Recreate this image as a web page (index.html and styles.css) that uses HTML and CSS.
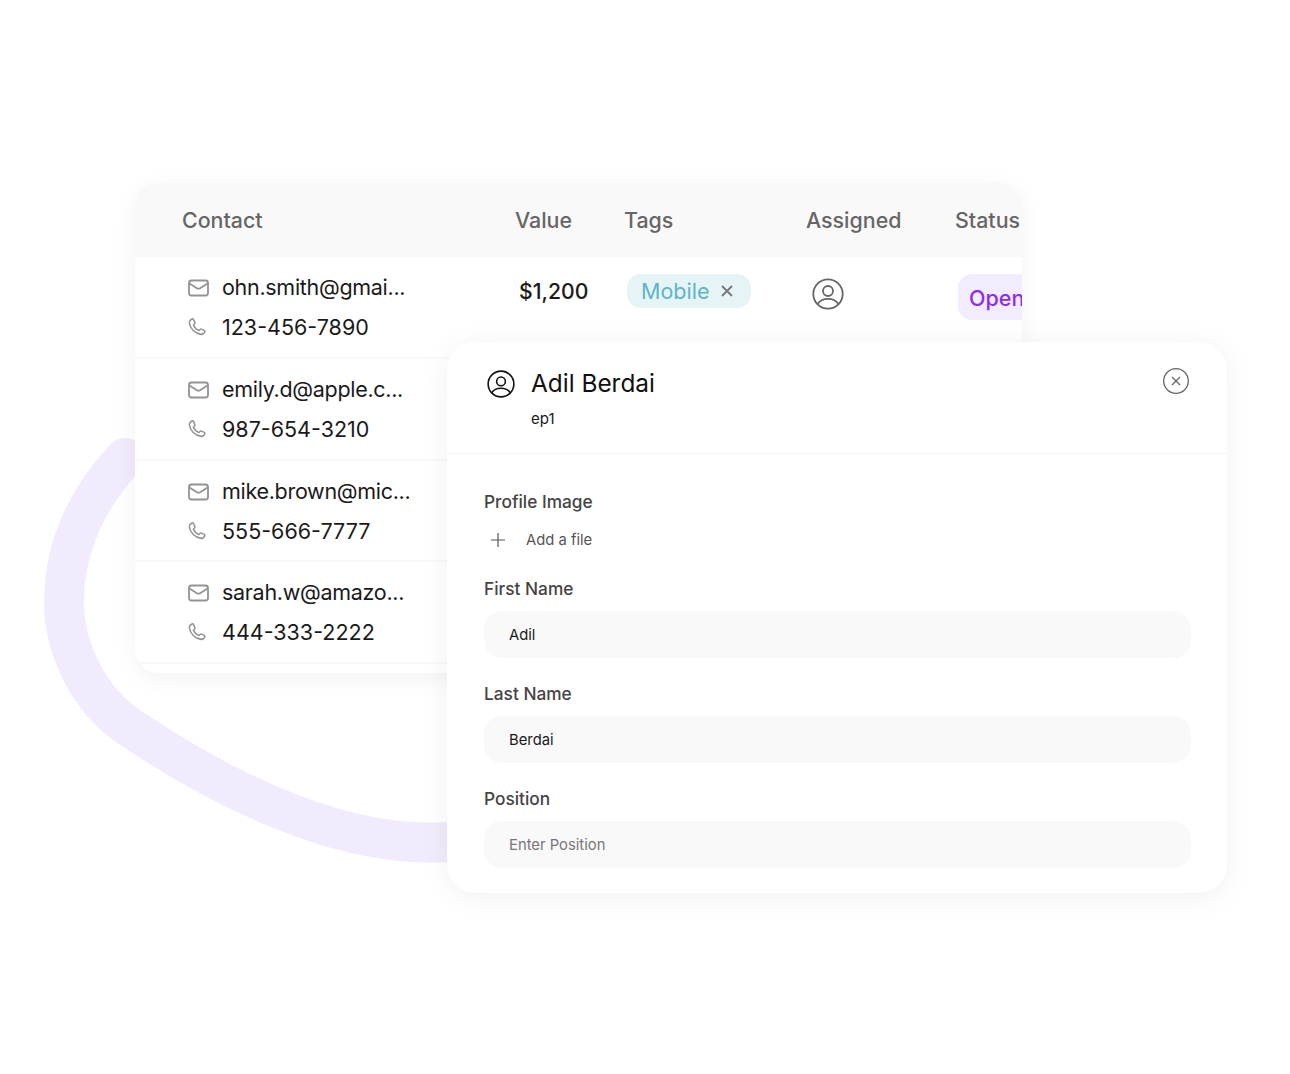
FILE: index.html
```html
<!DOCTYPE html>
<html lang="en">
<head>
  <meta charset="UTF-8" />
  <meta name="viewport" content="width=device-width, initial-scale=1.0"/>
  <title>Contacts</title>
  <link rel="stylesheet" href="styles.css">
</head>
<body>

<svg width="0" height="0" class="defs">
  <symbol id="i-mail" viewBox="0 0 22 20">
    <rect x="2" y="3.500" width="19" height="15" rx="2.500" fill="none" stroke="currentColor" stroke-width="1.800"/>
    <path d="M2.500 6.500l7.400 4.700a3 3 0 0 0 3.200 0L20.500 6.500" fill="none" stroke="currentColor" stroke-width="1.800"/>
  </symbol>
  <symbol id="i-phone" viewBox="0 0 20 20">
    <path d="M6 1.500 7.600 5a1.500 1.500 0 0 1-.4 1.700L6 7.800a11 11 0 0 0 6.200 6.200l1.100-1.200a1.500 1.500 0 0 1 1.700-.4l3 1.400c.6.3.8.9.6 1.500-.6 1.900-2.100 3-4 2.900C7.600 17.300 2.500 12 1.500 5.500 1.300 3.500 2.500 2 4.300 1.100 5 .8 5.700 1 6 1.500Z" fill="none" stroke="currentColor" stroke-width="1.700" stroke-linejoin="round"/>
  </symbol>
  <symbol id="i-user" viewBox="0 0 32 32">
    <circle cx="16" cy="16" r="14.700" fill="none" stroke="currentColor" stroke-width="1.800"/>
    <circle cx="16" cy="13" r="5" fill="none" stroke="currentColor" stroke-width="1.800"/>
    <path d="M5.500 26c2-3.300 5.800-5.200 10.500-5.200S24.500 22.700 26.500 26" fill="none" stroke="currentColor" stroke-width="1.800"/>
  </symbol>
</svg>

<div class="canvas">
  <svg class="curve" width="460" height="440" viewBox="0 0 460 440">
    <path d="M125 28C85 70 64 120 64 172C64 220 90 270 128 296C200 345 330 420 447 412" fill="none" stroke="#f2ebfe" stroke-width="40" stroke-linecap="round"/>
  </svg>

  <div class="table-card">
    <div class="table-row table-head">
      <div class="col-contact">Contact</div>
      <div>Value</div>
      <div>Tags</div>
      <div>Assigned</div>
      <div>Status</div>
    </div>

    <div class="table-row contact-row">
      <div class="contact-cell">
        <div class="contact-line email"><svg class="line-icon"><use href="#i-mail"/></svg>ohn.smith@gmai...</div>
        <div class="contact-line"><svg class="line-icon phone"><use href="#i-phone"/></svg>123-456-7890</div>
      </div>
      <div class="value-cell">$1,200</div>
      <div class="tags-cell">
        <span class="tag">Mobile
          <svg class="tag-x" viewBox="0 0 12 12"><path d="M1 1l10 10M11 1 1 11" fill="none" stroke="currentColor" stroke-width="1.800"/></svg>
        </span>
      </div>
      <div class="assigned-cell"><svg class="avatar"><use href="#i-user"/></svg></div>
      <div class="status-cell"><span class="status">Open</span></div>
    </div>

    <div class="table-row contact-row">
      <div class="contact-cell">
        <div class="contact-line email"><svg class="line-icon"><use href="#i-mail"/></svg>emily.d@apple.c...</div>
        <div class="contact-line"><svg class="line-icon phone"><use href="#i-phone"/></svg>987-654-3210</div>
      </div>
    </div>

    <div class="table-row contact-row">
      <div class="contact-cell">
        <div class="contact-line email"><svg class="line-icon"><use href="#i-mail"/></svg>mike.brown@mic...</div>
        <div class="contact-line"><svg class="line-icon phone"><use href="#i-phone"/></svg>555-666-7777</div>
      </div>
    </div>

    <div class="table-row contact-row">
      <div class="contact-cell">
        <div class="contact-line email"><svg class="line-icon"><use href="#i-mail"/></svg>sarah.w@amazo...</div>
        <div class="contact-line"><svg class="line-icon phone"><use href="#i-phone"/></svg>444-333-2222</div>
      </div>
    </div>
  </div>

  <div class="form-card">
    <div class="form-head">
      <svg class="form-avatar"><use href="#i-user"/></svg>
      <div class="form-title">
        <h2>Adil Berdai</h2>
        <p>ep1</p>
      </div>
      <svg class="close" viewBox="0 0 26 26">
        <circle cx="13" cy="13" r="12.300" fill="none" stroke="currentColor" stroke-width="1.300"/>
        <path d="M9 9l8 8M17 9l-8 8" fill="none" stroke="currentColor" stroke-width="1.300"/>
      </svg>
    </div>

    <div class="form-body">
      <div class="label">Profile Image</div>
      <div class="add-file">
        <svg class="plus" viewBox="0 0 16 16"><path d="M8 1v14M1 8h14" fill="none" stroke="currentColor" stroke-width="1.200"/></svg>
        Add a file
      </div>

      <div class="label first">First Name</div>
      <div class="input">Adil</div>

      <div class="label">Last Name</div>
      <div class="input">Berdai</div>

      <div class="label">Position</div>
      <div class="input empty">Enter Position</div>
    </div>
  </div>
</div>

</body>
</html>
```

FILE: styles.css
```css
body {
  margin: 0;
  background: #fff;
  color: #1a1a1a;
  font-family: Inter, "Liberation Sans", sans-serif;
}
.defs {
  display: block;
  height: 0;
}
.canvas {
  position: relative;
  width: 1290px;
  height: 1074px;
  overflow: hidden;
}
.curve {
  position: absolute;
  left: 0;
  top: 430px;
}

/* table window */
.table-card {
  position: absolute;
  left: 135px;
  top: 182px;
  width: 887px;
  height: 491px;
  background: #fff;
  border-radius: 24px;
  overflow: hidden;
  box-shadow: 0 6px 24px rgba(0, 0, 0, 0.05);
}
.table-row {
  display: grid;
  grid-template-columns: 380px 109px 182px 149px 1fr;
}
.table-head {
  height: 75px;
  align-items: center;
  background: #f9f9f9;
  color: #666;
  font-size: 21.4px;
  font-weight: 500;
}
.col-contact {
  padding-left: 47px;
}
.contact-row {
  height: 99.8px;
  border-bottom: 2px solid #f9f9f9;
  font-size: 21.5px;
}
.contact-cell {
  padding: 10px 0 0 52px;
}
.contact-line {
  display: flex;
  align-items: center;
  height: 40px;
  white-space: nowrap;
}
.contact-line.email {
  letter-spacing: -0.3px;
}
.line-icon {
  width: 22px;
  height: 20px;
  margin-right: 13px;
  color: #939393;
}
.line-icon.phone {
  width: 18px;
  height: 18px;
  margin: 0 16px 0 1px;
}
.value-cell {
  padding: 21px 0 0 4px;
  font-size: 21.2px;
  font-weight: 500;
}
.tags-cell {
  padding: 17px 0 0 3px;
}
.tag {
  display: inline-flex;
  align-items: center;
  height: 34px;
  padding: 0 18px 0 14px;
  border-radius: 14px;
  background: #e6f4f6;
  color: #5db5c8;
}
.tag-x {
  width: 12px;
  height: 12px;
  margin-left: 12px;
  color: #777;
}
.assigned-cell {
  padding: 21px 0 0 6px;
}
.avatar {
  width: 32px;
  height: 32px;
  color: #666;
}
.status-cell {
  padding: 17px 0 0 3px;
}
.status {
  display: inline-flex;
  align-items: center;
  height: 46px;
  padding: 1px 12px 0 11px;
  box-sizing: border-box;
  border-radius: 14px;
  background: #f3ebfe;
  color: #8b2cf5;
  font-weight: 500;
}

/* form window */
.form-card {
  position: absolute;
  left: 447px;
  top: 342px;
  width: 780px;
  height: 551px;
  background: #fff;
  border-radius: 28px;
  box-shadow: 0 4px 30px rgba(0, 0, 0, 0.06);
}
.form-head {
  display: flex;
  height: 112px;
  padding: 26px 38px 0 40px;
  box-sizing: border-box;
  border-bottom: 1px solid #f5f5f5;
}
.form-avatar {
  width: 28px;
  height: 28px;
  margin: 2px 16px 0 0;
  color: #111;
}
.form-title {
  flex: 1;
}
.form-title h2 {
  margin: 0;
  color: #111;
  font-size: 24.4px;
  font-weight: 400;
  line-height: 30px;
}
.form-title p {
  margin: 12px 0 0;
  font-size: 15px;
  line-height: 18px;
}
.close {
  width: 26px;
  height: 26px;
  color: #666;
}
.form-body {
  padding: 37px 36px 0 37px;
}
.label {
  margin-top: 25px;
  color: #444;
  font-size: 17.3px;
  font-weight: 500;
  line-height: 22px;
}
.label:first-child {
  margin-top: 0;
}
.label.first {
  margin-top: 19px;
}
.add-file {
  display: flex;
  align-items: center;
  height: 38px;
  margin-top: 8px;
  color: #555;
  font-size: 14.8px;
}
.plus {
  width: 16px;
  height: 16px;
  margin: 0 20px 0 6px;
}
.input {
  display: flex;
  align-items: center;
  height: 47px;
  margin-top: 11px;
  padding-left: 25px;
  border-radius: 18px;
  background: #f9f9f9;
  font-size: 14.8px;
}
.input.empty {
  color: #777;
}
```
